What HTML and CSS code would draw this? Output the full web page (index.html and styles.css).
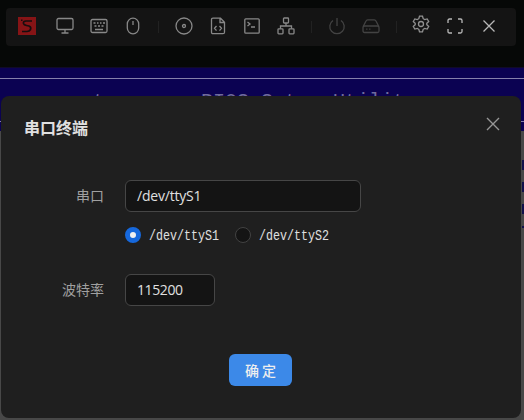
FILE: index.html
```html
<!DOCTYPE html>
<html lang="zh-CN">
<head>
<meta charset="utf-8">
<title>串口终端</title>
<link rel="stylesheet" href="styles.css">
</head>
<body>
<header class="top">
  <nav class="toolbar">
    <svg class="logo" viewBox="0 0 18 18"><rect width="18" height="18" fill="#861416"/><path d="M14 4H8Q5 4 5.500 6.500Q6 8 8.500 8.500L11 9Q13.500 10 12.500 12.500Q11.500 14.500 9 14.500H4" fill="none" stroke="#170d0e" stroke-width="1.700"/><path d="M3 2.500h1.500v1.500H3z" fill="#170d0e"/></svg>
    <span class="cell"><svg viewBox="0 0 18 18"><rect x="1" y="1.500" width="16" height="11" rx="1.500"/><path d="M9 12.500V16M5.500 16h7"/></svg></span>
    <span class="cell"><svg viewBox="0 0 18 18"><rect x="1" y="2.500" width="16" height="13" rx="1.500"/><path d="M3.500 6h2M7 6h1.500M10 6h1.500M13 6h2M4.500 9h2M8 9h2M11.500 9h2M5 12.500h8"/></svg></span>
    <span class="cell"><svg viewBox="0 0 18 18"><rect x="3.300" y="1.200" width="11.400" height="15.600" rx="5.700"/><path d="M9 4v4"/></svg></span>
    <i class="divider"></i>
    <span class="cell"><svg viewBox="0 0 18 18"><circle cx="9" cy="9" r="8"/><circle cx="9" cy="9" r="1.500"/></svg></span>
    <span class="cell"><svg viewBox="0 0 18 18"><path d="M4 1.200h7.500l4 4v10q0 1.500-1.500 1.500H4q-1.500 0-1.500-1.500V2.700q0-1.500 1.500-1.500zM11 1.500v4h4M7.500 9l-2 2.300 2 2.300M10.500 9l2 2.300-2 2.300"/></svg></span>
    <span class="cell"><svg viewBox="0 0 18 18"><rect x="1.800" y="1.800" width="14.400" height="14.400" rx="1"/><path d="M4.500 5l2.500 2-2.500 2M8 10h4"/></svg></span>
    <span class="cell"><svg viewBox="0 0 18 18"><rect x="6.500" y="1" width="5" height="5" rx=".7"/><rect x="1" y="11.800" width="5" height="5" rx=".7"/><rect x="12" y="11.800" width="5" height="5" rx=".7"/><path d="M9 6v3M3.500 11.800V9h11v2.800"/></svg></span>
    <i class="divider"></i>
    <span class="cell dim"><svg viewBox="0 0 18 18"><path d="M9 1v8M5 3.500a7.200 7.200 0 1 0 8 0"/></svg></span>
    <span class="cell dim"><svg viewBox="0 0 18 18"><path d="M1.200 9.500L4 4q.5-1.200 1.700-1.200h6.600q1.200 0 1.700 1.200l2.800 5.500M4.200 12.200h1.200M7.200 12.200h1.200"/><rect x="1" y="9" width="16" height="6.500" rx="1.500"/></svg></span>
    <i class="divider"></i>
    <span class="cell raised"><svg viewBox="0 0 18 18"><path d="M7.500 1.200h3l.7 2.500 1.500.9 2.500-.7 1.500 2.600-1.900 1.700v1.600l1.900 1.700-1.500 2.600-2.500-.7-1.500.9-.7 2.500h-3l-.7-2.500-1.500-.9-2.500.7-1.500-2.600 1.900-1.700V8.200L1.300 6.500l1.500-2.600 2.500.7 1.500-.9z"/><circle cx="9" cy="9" r="2.500"/></svg></span>
    <span class="cell bright"><svg viewBox="0 0 18 18"><path d="M2 6V3.500Q2 2 3.500 2H6M12 2h2.500Q16 2 16 3.500V6M16 12v2.500q0 1.500-1.500 1.500H12M6 16H3.500Q2 16 2 14.500V12"/></svg></span>
    <span class="cell bright"><svg viewBox="0 0 18 18"><path d="M3.500 3.500l11 11M14.500 3.500l-11 11"/></svg></span>
  </nav>
</header>
<main class="console">
  <div class="banner"><pre class="utility">t        BIOS Setup Utility</pre></div>
  <div class="panel"><span class="marks"></span></div>
</main>
<section class="dialog">
  <div class="heading">
    <h1>串口终端</h1>
    <svg class="close" viewBox="0 0 14 14"><path d="M1 1l12 12M13 1L1 13"/></svg>
  </div>
  <div class="row">
    <label>串口</label><div class="field wide">/dev/ttyS1</div>
  </div>
  <div class="options">
    <span class="radio checked"></span><span class="option"><span class="mono">/dev/ttyS1</span></span>
    <span class="radio"></span><span class="option"><span class="mono">/dev/ttyS2</span></span>
  </div>
  <div class="row">
    <label>波特率</label><div class="field short">115200</div>
  </div>
  <div class="actions"><button>确 定</button></div>
</section>
</body>
</html>
```
FILE: styles.css
```css
* { box-sizing: border-box; }
body {
  margin: 0;
  width: 524px;
  height: 420px;
  overflow: hidden;
  position: relative;
  background: #060807;
  color: #e0e0e0;
  font-family: "Open Sans", "Noto Sans CJK SC", sans-serif;
}
.top { height: 67px; padding: 8px 8px 0 6px; }
.toolbar {
  height: 38px;
  display: flex;
  align-items: center;
  padding-left: 11.500px;
  background: #141414;
  border-radius: 4px;
}
.logo { width: 18px; height: 18px; margin: 0 12px 2px 0; }
.cell { width: 34px; height: 34px; padding-bottom: 2px; display: grid; place-items: center; color: #888; flex: none; }
.cell svg { width: 18px; height: 18px; fill: none; stroke: currentColor; stroke-width: 1.300; }
.dim { color: #434343; }
.raised { padding: 0 1px 6px 0; color: #909090; }
.bright { color: #b8b8b8; }
.bright svg { margin-right: 1px; }
.divider { width: 17px; height: 12px; background: linear-gradient(#222, #222) center / 1px 100% no-repeat; }
.console { height: 353px; background: #484848; }
.banner { height: 64px; background: #0b0252; padding-top: 10px; border-top: 1px solid #100b28; }
.utility {
  height: 44px;
  margin: 0;
  padding: 11px 0 0 93px;
  border-top: 1px solid #8580ab;
  border-bottom: 1px solid #8580ab;
  color: #706b9c;
  font: 20px/24px "Liberation Mono", monospace;
}
.panel { height: 289px; display: flex; justify-content: flex-end; padding-top: 29px; }
.marks { width: 2px; height: 68px; background: repeating-linear-gradient(#11104b 0 10px, #484848 10px 22px); }
.dialog {
  position: absolute;
  left: 1px;
  top: 96px;
  width: 520px;
  height: 322px;
  padding: 20px 21px 0 24px;
  background: #1f1f1f;
  border-radius: 8px;
}
.heading { height: 64px; display: flex; justify-content: space-between; align-items: flex-start; }
h1 { margin: -1px 0 0 -1px; font: 700 16px/24px "Noto Sans CJK SC", sans-serif; }
.close { width: 14px; height: 14px; margin-top: 1px; stroke: #969696; stroke-width: 1.400; fill: none; }
.row { height: 32px; display: flex; align-items: center; }
label { width: 79px; margin: 0 21px 2px 0; text-align: right; color: #a0a0a0; font: 14px/22px "Noto Sans CJK SC", sans-serif; }
.field {
  height: 32px;
  padding-left: 11px;
  border: 1px solid #464646;
  border-radius: 6px;
  background: #141414;
  font-size: 14px;
  line-height: 30px;
  letter-spacing: -.2px;
}
.wide { width: 236px; }
.short { width: 90px; letter-spacing: -.4px; }
.options { height: 62px; padding: 15px 0 0 100px; display: flex; align-items: flex-start; }
.radio { width: 16px; height: 16px; border: 1px solid #424242; border-radius: 50%; background: #141414; flex: none; }
.checked { border: 5px solid #1668dc; background: #f0f0f0; }
.option { width: 86px; padding-left: 8px; font: 14px/18px "Liberation Mono", monospace; }
.mono { display: inline-block; transform: scaleX(.833); transform-origin: left; }
.option + .radio { margin-left: 8px; }
.actions { padding: 48px 0 0 204px; }
button {
  display: block;
  width: 63px;
  height: 32px;
  padding: 0;
  border: 0;
  border-radius: 6px;
  background: #3c89e8;
  color: #eee;
  font: 500 14px/32px "Noto Sans CJK SC", sans-serif;
}
```
